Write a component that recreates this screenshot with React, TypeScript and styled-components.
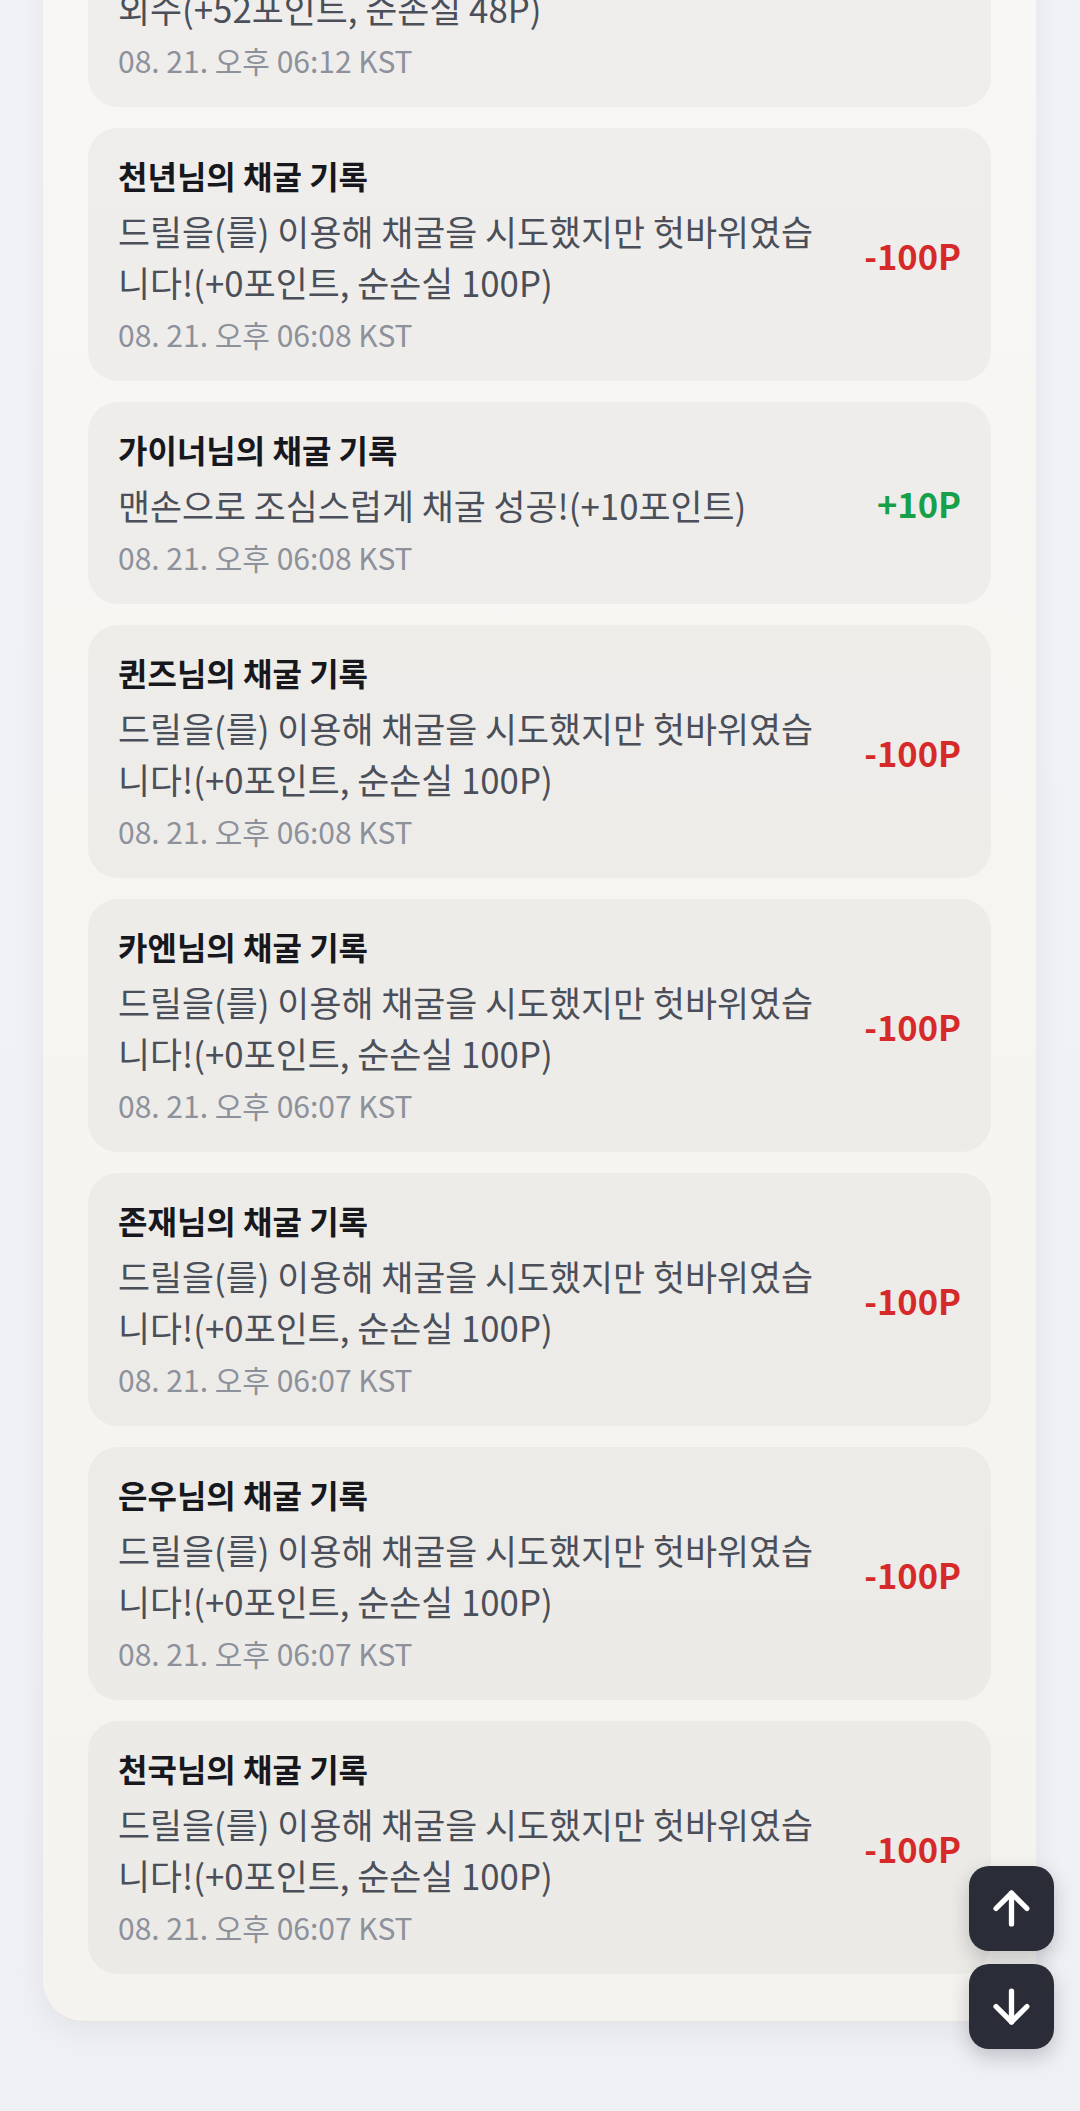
import React from "react";
import styled, { createGlobalStyle } from "styled-components";
import { ArrowUp, ArrowDown } from "lucide-react";

const GlobalStyle = createGlobalStyle`
  html, body {
    margin: 0;
    padding: 0;
    background: #f0f1f5;
    font-family: "Noto Sans CJK KR", "Noto Sans", sans-serif;
  }
  * { box-sizing: border-box; }
`;

const Page = styled.div`
  min-height: 2111px;
  padding: 0 44px 0 43px;
  background: linear-gradient(180deg, #f1f2f5 0%, #eff0f4 100%);
  overflow: hidden;
`;

const Panel = styled.section`
  margin-top: -191px;
  padding: 45px 45px 47px;
  border-radius: 40px;
  background: linear-gradient(180deg, #f8f7f5 0%, #f4f3ef 100%);
  box-shadow: 0 1px 0 #e4e3e0, 0 10px 30px rgba(30, 35, 50, 0.06);
  display: flex;
  flex-direction: column;
  gap: 21px;
`;

const Item = styled.article`
  display: flex;
  align-items: center;
  gap: 30px;
  padding: 27px 30px;
  border-radius: 30px;
  background: rgba(60, 55, 50, 0.045);
`;

const Info = styled.div`
  flex: 1;
  min-width: 0;
  display: flex;
  flex-direction: column;
`;

const Title = styled.div`
  font-size: 32px;
  font-weight: 700;
  line-height: 40px;
  color: #16181d;
`;

const Body = styled.div`
  margin-top: 11px;
  font-size: 34.8px;
  line-height: 51px;
  color: #4a4f59;
  white-space: pre-line;
`;

const Time = styled.div`
  margin-top: 6px;
  font-size: 30px;
  line-height: 40px;
  color: #8c919b;
`;

const Amount = styled.div<{ $positive: boolean }>`
  flex: none;
  font-size: 34.5px;
  font-weight: 700;
  color: ${(p) => (p.$positive ? "#17a04a" : "#d62a2a")};
`;

const Floating = styled.div`
  position: fixed;
  right: 26px;
  bottom: 62px;
  display: flex;
  flex-direction: column;
  gap: 13px;
`;

const RoundButton = styled.button`
  width: 85px;
  height: 85px;
  border: none;
  border-radius: 20px;
  background: #2a2d37;
  color: #ffffff;
  display: flex;
  align-items: center;
  justify-content: center;
  box-shadow: 0 8px 20px rgba(20, 24, 35, 0.22);
  padding: 0;
  cursor: pointer;
`;

type Record = {
  name: string;
  body: string;
  time: string;
  amount: string;
};

const DRILL = "드릴을(를) 이용해 채굴을 시도했지만 헛바위였습니다!(+0포인트, 순손실 100P)";

const records: Record[] = [
  {
    name: "하늘",
    body: "드릴을(를) 이용해 채굴에 성공했지만 예상\n외수(+52포인트, 순손실 48P)",
    time: "08. 21. 오후 06:12 KST",
    amount: "-48P",
  },
  { name: "천년", body: DRILL, time: "08. 21. 오후 06:08 KST", amount: "-100P" },
  {
    name: "가이너",
    body: "맨손으로 조심스럽게 채굴 성공!(+10포인트)",
    time: "08. 21. 오후 06:08 KST",
    amount: "+10P",
  },
  { name: "퀸즈", body: DRILL, time: "08. 21. 오후 06:08 KST", amount: "-100P" },
  { name: "카엔", body: DRILL, time: "08. 21. 오후 06:07 KST", amount: "-100P" },
  { name: "존재", body: DRILL, time: "08. 21. 오후 06:07 KST", amount: "-100P" },
  { name: "은우", body: DRILL, time: "08. 21. 오후 06:07 KST", amount: "-100P" },
  { name: "천국", body: DRILL, time: "08. 21. 오후 06:07 KST", amount: "-100P" },
];

export default function App() {
  return (
    <>
      <GlobalStyle />
      <Page>
        <Panel>
          {records.map((r, i) => (
            <Item key={i}>
              <Info>
                <Title>{r.name}님의 채굴 기록</Title>
                <Body>{r.body}</Body>
                <Time>{r.time}</Time>
              </Info>
              <Amount $positive={r.amount.startsWith("+")}>{r.amount}</Amount>
            </Item>
          ))}
        </Panel>
      </Page>
      <Floating>
        <RoundButton aria-label="맨 위로">
          <ArrowUp size={53} strokeWidth={2.4} />
        </RoundButton>
        <RoundButton aria-label="맨 아래로">
          <ArrowDown size={53} strokeWidth={2.4} />
        </RoundButton>
      </Floating>
    </>
  );
}
